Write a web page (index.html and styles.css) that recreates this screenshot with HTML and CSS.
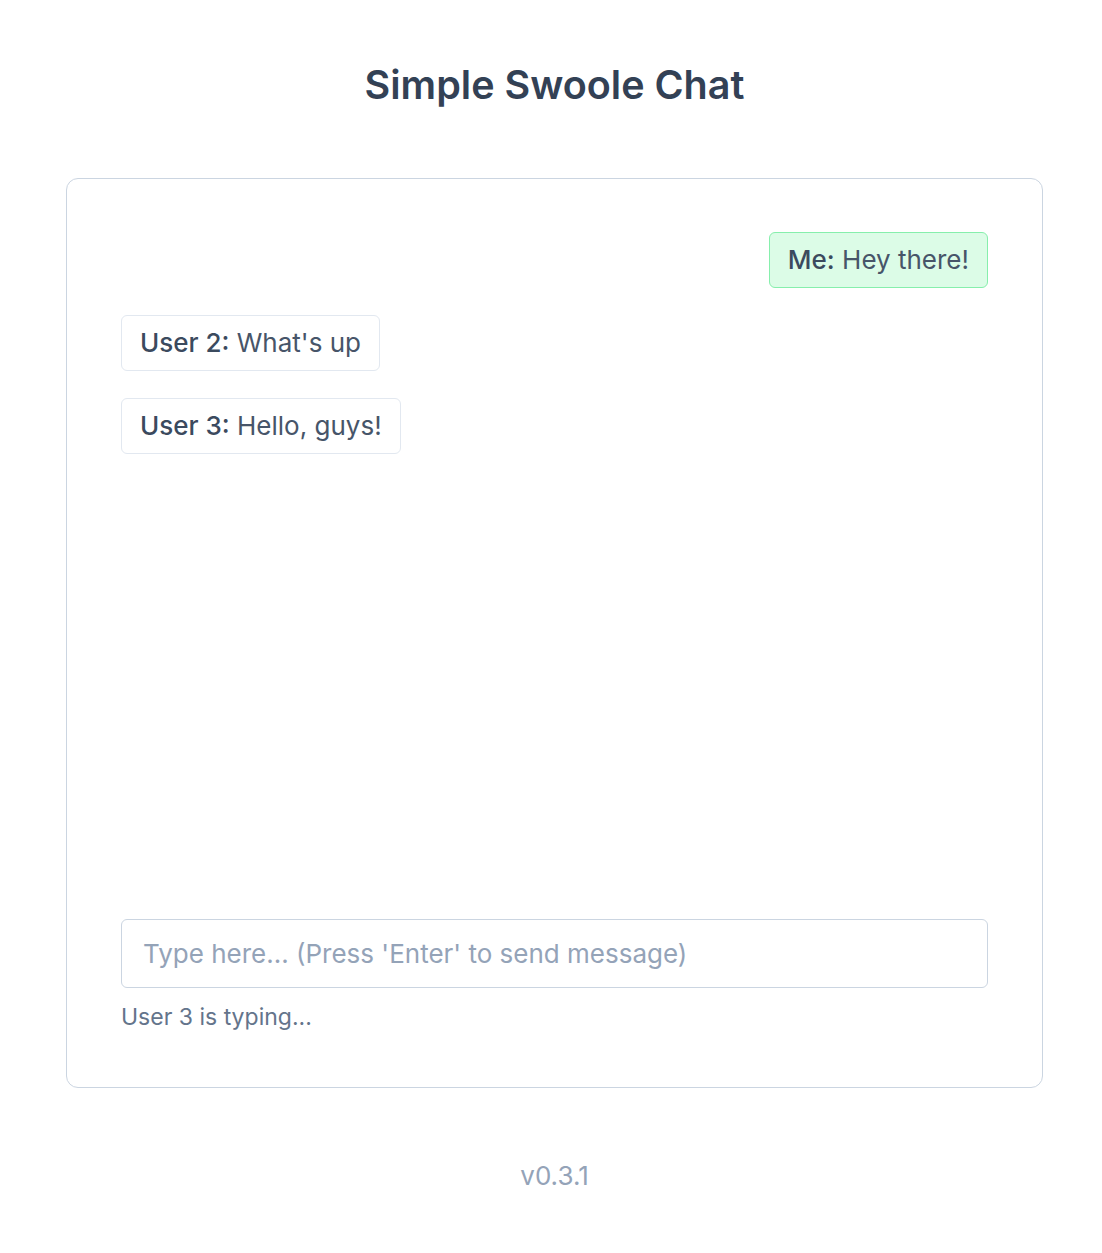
FILE: index.html
```html
<!DOCTYPE html>
<html lang="en">
<head>
<meta charset="utf-8">
<title>Simple Swoole Chat</title>
<link rel="stylesheet" href="styles.css">
</head>
<body>
<main class="page">
  <h1 class="title">Simple Swoole Chat</h1>
  <section class="card">
    <div class="messages">
      <div class="msg msg-me"><span class="author">Me:</span> Hey there!</div>
      <div class="msg"><span class="author">User 2:</span> What's up</div>
      <div class="msg"><span class="author">User 3:</span> Hello, guys!</div>
    </div>
    <input class="input" type="text" placeholder="Type here... (Press 'Enter' to send message)">
    <div class="typing">User 3 is typing...</div>
  </section>
  <footer class="version">v0.3.1</footer>
</main>
</body>
</html>
```
FILE: styles.css
```css
* { box-sizing: border-box; }
html, body { margin: 0; padding: 0; background: #ffffff; }
body { font-family: Inter, "Noto Sans", sans-serif; color: #334155; }
.page {
  display: flex;
  flex-direction: column;
  align-items: center;
  padding: 57px 59px 0 66px;
}
.title {
  margin: 0;
  font-size: 39.5px;
  line-height: 56px;
  font-weight: 600;
  color: #334155;
}
.card {
  margin-top: 65px;
  width: 977px;
  height: 910px;
  border: 1px solid #cbd5e1;
  border-radius: 12px;
  padding: 53px 54px 0 54px;
  display: flex;
  flex-direction: column;
}
.messages {
  height: 687px;
  display: flex;
  flex-direction: column;
  align-items: flex-start;
  gap: 27px;
}
.msg {
  font-size: 26px;
  line-height: 32px;
  padding: 11px 18px;
  border: 1px solid #e2e8f0;
  border-radius: 6px;
  color: #475569;
  background: #ffffff;
}
.msg-me {
  align-self: flex-end;
  background: #dcfce7;
  border-color: #86efac;
}
.author { font-weight: 500; color: #3b4a5e; }
.input {
  display: block;
  width: 100%;
  height: 69px;
  border: 1px solid #cbd5e1;
  border-radius: 6px;
  padding: 0 21px;
  font-family: Inter, "Noto Sans", sans-serif;
  font-size: 26px;
  color: #334155;
  outline: none;
}
.input::placeholder { color: #94a3b8; }
.typing {
  margin-top: 14px;
  font-size: 23px;
  line-height: 30px;
  color: #64748b;
}
.version {
  margin-top: 72px;
  font-size: 26px;
  line-height: 32px;
  color: #94a3b8;
}
```
